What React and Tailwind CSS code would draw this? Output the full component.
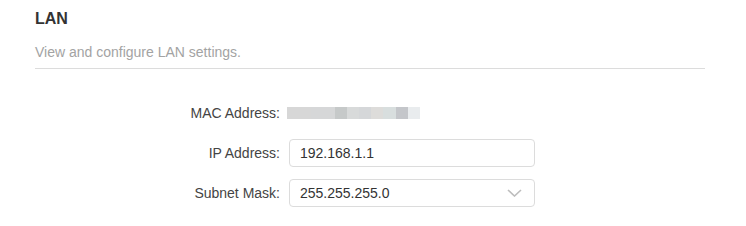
import React from "react";

const MAC_BLOCKS = [
  { w: "w-[24px]", c: "bg-[#d7d7d7]" },
  { w: "w-[24px]", c: "bg-[#d6d7d8]" },
  { w: "w-[12px]", c: "bg-[#c6c9c9]" },
  { w: "w-[12px]", c: "bg-[#d8dada]" },
  { w: "w-[12px]", c: "bg-[#d5d7d9]" },
  { w: "w-[12px]", c: "bg-[#dddcda]" },
  { w: "w-[13px]", c: "bg-[#d8dede]" },
  { w: "w-[12px]", c: "bg-[#c4c6ca]" },
  { w: "w-[12px]", c: "bg-[#e9ecee]" },
];

function Row({ label, children }) {
  return (
    <div className="flex items-center gap-[9px] h-[28px]">
      <div className="w-[280px] text-right text-[14px] text-[#444]">{label}</div>
      {children}
    </div>
  );
}

export default function App() {
  return (
    <div
      className="w-[746px] h-[226px] bg-white px-[35px] pt-[9px]"
      style={{ fontFamily: '"Liberation Sans", Arial, sans-serif' }}
    >
      <h1 className="text-[16px] font-bold text-[#333] leading-[20px]">LAN</h1>
      <p className="mt-[15px] text-[14px] text-[#a3a3a3] leading-[16px]">View and configure LAN settings.</p>
      <div className="mt-[8px] w-[670px] border-t border-[#dcdcdc]" />

      <div className="-ml-[35px] mt-[30px] flex flex-col gap-[12px]">
        <Row label="MAC Address:">
          <div className="flex h-[12px] -ml-[2px]">
            {MAC_BLOCKS.map((b, i) => (
              <div key={i} className={`${b.w} ${b.c} h-full`} />
            ))}
          </div>
        </Row>
        <Row label="IP Address:">
          <div className="w-[246px] h-[28px] border border-[#dcdcdc] rounded-[4px] px-[10px] flex items-center text-[14px] text-[#333]">
            192.168.1.1
          </div>
        </Row>
        <Row label="Subnet Mask:">
          <div className="w-[246px] h-[28px] border border-[#dcdcdc] rounded-[4px] pl-[10px] pr-[12px] flex items-center justify-between text-[14px] text-[#333]">
            <span>255.255.255.0</span>
            <svg width="15" height="8" viewBox="0 0 15 8" fill="none">
              <path d="M1 1l6.5 6L14 1" stroke="#bdbdbd" strokeWidth="1.6" />
            </svg>
          </div>
        </Row>
      </div>
    </div>
  );
}
